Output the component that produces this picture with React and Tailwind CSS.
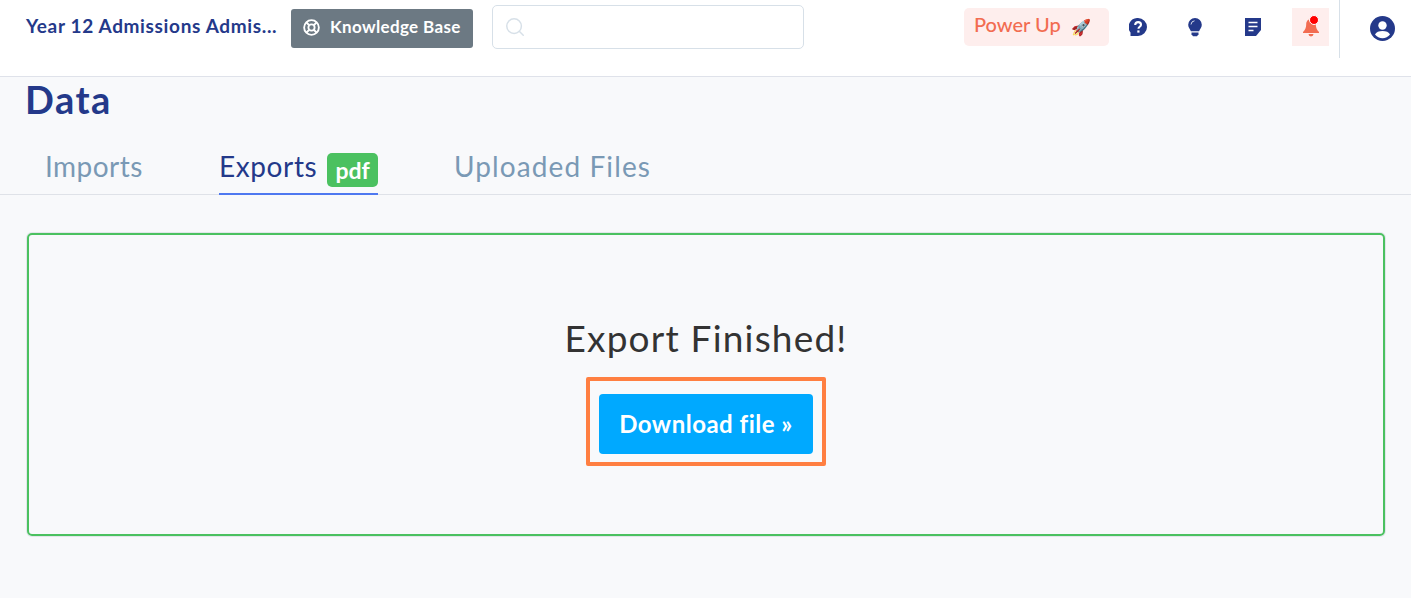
import { Search } from 'lucide-react';

const NAVY = 'text-[#24398a]';

function LifeRing() {
  return (
    <svg className="mb-[2px]" width="17" height="17" viewBox="0 0 24 24" fill="none" stroke="currentColor" strokeWidth="2.6">
      <circle cx="12" cy="12" r="10.4" />
      <circle cx="12" cy="12" r="4.4" />
      <path d="M4.6 4.6l4.2 4.2M19.4 4.6l-4.2 4.2M4.6 19.4l4.2-4.2M19.4 19.4l-4.2-4.2" />
    </svg>
  );
}

function HelpIcon() {
  return (
    <svg width="18" height="18" viewBox="0 0 18 18">
      <path d="M9 0a9 9 0 0 1 0 18H1.500v-3.500A9 9 0 0 1 9 0z" fill="currentColor" />
      <path d="M6.200 7c0-1.800 1.200-2.900 2.900-2.900s2.900 1 2.900 2.600c0 2.100-2.500 2-2.500 4" fill="none" stroke="#fff" strokeWidth="2.100" />
      <rect x="8.300" y="12.400" width="2.200" height="2.200" fill="#fff" />
    </svg>
  );
}

function BulbIcon() {
  return (
    <svg width="14" height="19" viewBox="0 0 14 19">
      <path d="M7 0a6.800 6.800 0 0 1 6.800 6.800c0 2.900-2 4.400-2.700 6.400H2.900C2.200 11.200.2 9.700.2 6.800A6.800 6.800 0 0 1 7 0z" fill="currentColor" />
      <path d="M3 6.500A4 4 0 0 1 6.500 2.800" fill="none" stroke="#fff" strokeWidth=".8" />
      <path d="M3.500 14.500h7v1.800l-1.500 2h-4l-1.500-2z" fill="currentColor" />
    </svg>
  );
}

function NoteIcon() {
  return (
    <svg width="16" height="18" viewBox="0 0 16 18">
      <path d="M0 0h16v12l-5 6H0z" fill="currentColor" />
      <path d="M3.500 4.500h9M3.500 8.500h9M3.500 12.500h5" stroke="#fff" strokeWidth="1.700" />
    </svg>
  );
}

function BellIcon() {
  return (
    <svg width="18" height="19" viewBox="0 0 18 19">
      <path d="M9 1c3.200 0 4.800 2.400 4.800 5.500 0 3.500 1.200 5.300 3.200 7.500v1H1v-1c2-2.200 3.200-4 3.200-7.500C4.200 3.400 5.800 1 9 1z" fill="#f26c51" />
      <path d="M6.500 16h5a2.500 2.500 0 0 1-5 0z" fill="#f26c51" />
    </svg>
  );
}

function UserIcon() {
  return (
    <svg width="25" height="25" viewBox="0 0 25 25">
      <circle cx="12.500" cy="12.500" r="12.500" fill="currentColor" />
      <circle cx="12.500" cy="9.500" r="4.200" fill="#fff" />
      <path d="M5 18.500c1-2.500 4-3.500 7.500-3.500s6.500 1 7.500 3.500a9.500 9.500 0 0 1-15 0z" fill="#fff" />
    </svg>
  );
}

function Header() {
  return (
    <header className="flex h-[77px] items-start border-b border-[#dfe2ea] bg-white">
      <div className={`ml-[26px] mt-[14px] w-[252px] whitespace-nowrap text-[19px] leading-[24px] font-bold tracking-[0.65px] ${NAVY}`}>
        Year 12 Admissions Admis...
      </div>
      <button className="ml-[13px] mt-[9px] flex h-[39px] w-[182px] items-center gap-[10px] rounded-[3px] bg-[#6c7983] pl-[12px] text-white">
        <LifeRing />
        <span className="pb-[3px] text-[17px] font-bold tracking-[0.35px]">Knowledge Base</span>
      </button>
      <div className="ml-[19px] mt-[5px] flex h-[44px] w-[312px] items-center rounded-[5px] border border-[#d7e0e8] bg-white pl-[11px] text-[#d7e0e8]">
        <Search size={22} strokeWidth={1.6} />
      </div>
      <button className="ml-[160px] mt-[8px] flex h-[38px] w-[145px] items-center gap-[10px] rounded-[5px] bg-[#feeeed] pl-[10px] text-[#f26c51]">
        <span className="pb-[7px] text-[20px] font-medium">Power Up</span>
        <span className="text-[16px] leading-none">🚀</span>
      </button>
      <div className={`mt-[18px] ml-[20px] ${NAVY}`}><HelpIcon /></div>
      <div className={`mt-[18px] ml-[41px] ${NAVY}`}><BulbIcon /></div>
      <div className={`mt-[18px] ml-[43px] ${NAVY}`}><NoteIcon /></div>
      <div className="relative ml-[31px] mt-[8px] flex h-[38px] w-[37px] items-center justify-center bg-[#feeeed]">
        <BellIcon />
        <span className="absolute right-[10px] top-[7px] box-content h-[8px] w-[8px] rounded-full border border-white bg-[#f00]" />
      </div>
      <div className="ml-[10px] h-[58px] w-px bg-[#d7e0e8]" />
      <div className={`ml-[30px] mt-[16px] ${NAVY}`}><UserIcon /></div>
    </header>
  );
}

function Tabs() {
  return (
    <nav className="mt-[23px] flex h-[53px] items-stretch border-b border-[#dfe2e8] pl-[45px] text-[28px] text-[#7a99b5]">
      <div className="w-[174px] pt-[6px] leading-[36px] tracking-[0.45px]">Imports</div>
      <div className={`-mb-px flex w-[159px] items-start gap-[10px] border-b-2 border-[#4e78f0] pt-[6px] leading-[36px] ${NAVY}`}>
        <span className="tracking-[0.6px]">Exports</span>
        <span className="mt-[5px] flex h-[34px] w-[51px] items-center justify-center rounded-[5px] bg-[#4bc160] text-[23px] font-bold text-white">
          pdf
        </span>
      </div>
      <div className="ml-[76px] pt-[6px] leading-[36px] tracking-[1.1px]">Uploaded Files</div>
    </nav>
  );
}

export default function App() {
  return (
    <div className="flex h-[598px] flex-col overflow-hidden bg-[#f8f9fb] font-['Lato',sans-serif]">
      <Header />
      <h1 className={`ml-[25px] mt-[2px] text-[38px] leading-[40px] font-bold tracking-[1.5px] ${NAVY}`}>Data</h1>
      <Tabs />
      <main className="ml-[27px] mr-[26px] mt-[38px] flex h-[303px] flex-col items-center rounded-[5px] border-2 border-[#4bc160] shadow-[0_0_0_1px_#e2e6ea]">
        <div className="mt-[80px] text-[37px] leading-[46px] tracking-[1.2px] text-[#333]">Export Finished!</div>
        <div className="mt-[16px] rounded-[2px] border-[4px] border-[#ff7f41] px-[9px] pb-[8px] pt-[13px]">
          <button className="flex h-[60px] w-[214px] items-center justify-center rounded-[4px] bg-[#00a9ff] text-[24px] font-bold tracking-[0.5px] text-white">
            Download file »
          </button>
        </div>
      </main>
    </div>
  );
}
